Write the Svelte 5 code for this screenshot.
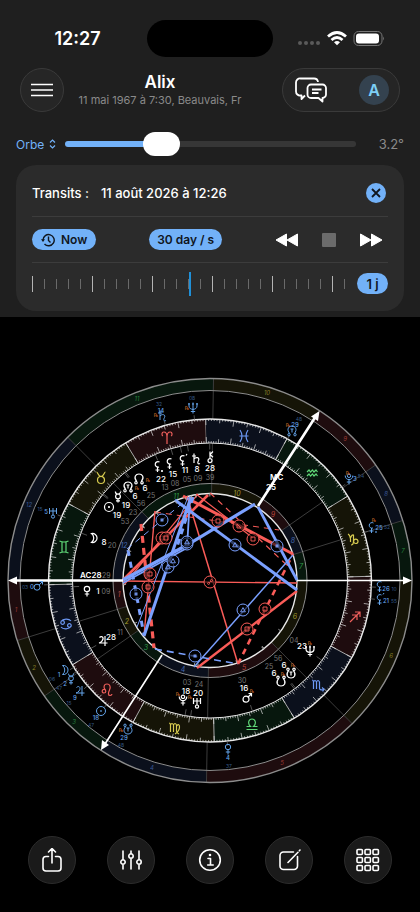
<script>
	let orb = $state(3.2);
	let orbMax = 10.4;
	let fill = $derived((orb / orbMax) * 100);

	// chart geometry
	const CX = 210;
	const CY = 580.5;
	const ASC = 91.5;
	const R_OUT = 202;
	const R_HOUSE = 190;
	const R_ZOD = 161.5;
	const R_ZOD_IN = 137.5;
	const R_RING = 97;
	const R_CORE = 87;

	const elements = ['red', 'yellow', 'green', 'blue'];
	const cusps = [180, 197.3, 214.9, 237.2, 269, 314.8, 360, 377.3, 394.9, 417.2, 449, 494.8, 540];

	function pt(angle, r) {
		const a = (angle * Math.PI) / 180;
		return [(CX + r * Math.cos(a)).toFixed(2), (CY - r * Math.sin(a)).toFixed(2)];
	}

	function ray(angle, r1, r2) {
		return 'M' + pt(angle, r1) + 'L' + pt(angle, r2);
	}

	function sector(a1, a2, r1, r2) {
		return `M${pt(a1, r1)}A${r1} ${r1} 0 0 0 ${pt(a2, r1)}L${pt(a2, r2)}A${r2} ${r2} 0 0 1 ${pt(a1, r2)}Z`;
	}

	let degreeTicks = '';
	for (let i = 0; i < 360; i++) {
		const len = i % 10 == 0 ? 6 : i % 5 == 0 ? 4 : 2;
		degreeTicks += ray(i + ASC, R_ZOD, R_ZOD - len);
		degreeTicks += ray(i + ASC, R_ZOD_IN, R_ZOD_IN + len);
	}

	const ring = (x, y, r) => `M${x - r},${y}a${r},${r} 0 1 0 ${2 * r},0a${r},${r} 0 1 0 ${-2 * r},0`;
	const node = 'M-2.3,2.6C-6,-2 -3,-5 0,-5S6,-2 2.3,2.6' + ring(-3, 3.7, 1.2) + ring(3, 3.7, 1.2);
	const nodeSouth = 'M-2.3,-2.6C-6,2 -3,5 0,5S6,2 2.3,-2.6' + ring(-3, -3.7, 1.2) + ring(3, -3.7, 1.2);
	const lilith = 'M2.5,-5A2.8 2.8 0 1 0 2,0M.5,0V5M-1.5,3H2.5';

	const glyphs = {
		sun: ring(0, 0, 4.5) + ring(0, 0, 0.5),
		moon: 'M-2.5,-4.5A4.6 4.6 0 1 1 -2.5,4.5A5.6 5.6 0 0 0 -2.5,-4.5Z',
		mercury: ring(0, -0.6, 2.4) + 'M-2.6,-5.4A2.6 2.6 0 0 0 2.6,-5.4M0,1.8V5.6M-2,3.8H2',
		venus: ring(0, -2, 2.7) + 'M0,.7V5.5M-2.2,3H2.2',
		mars: ring(-1, 1.2, 3) + 'M1.2,-1L4.5,-4.5M1.5,-4.5H4.5V-1.5',
		jupiter: 'M-3.5,-3.5C-1,-6 1.5,-3 -1,0Q-2,1.5 -4,2H4.5M2,-5V5',
		saturn: 'M-4,-3H0M-2,-5.5V4M-2,0C0,-2.5 4,-1.5 2.5,1.5C1,4 2,5.5 4,4.5',
		uranus: 'M-3.5,-5V1M3.5,-5V1M-3.5,-2H3.5M0,-5V2' + ring(0, 3.6, 1.6),
		neptune: 'M-4,-5V-2C-4,2.5 4,2.5 4,-2V-5M0,-5.5V5.5M-2.2,3.5H2.2M-5,-4H-3M3,-4H5M-1,-4H1',
		pluto: ring(0, -3.2, 1.7) + 'M-3.8,-3.5C-3.8,2 3.8,2 3.8,-3.5M0,.7V5.5M-2.2,3H2.2',
		chiron: ring(0, 3.6, 2) + 'M0,1.6V-5.5M3,-5.5L0,-2.5L3,.3',
		node,
		nodeTrue: node + 'M-1.5,-2H1.5M0,-2V1.5',
		nodeSouth,
		nodeSouthTrue: nodeSouth + 'M-1.5,-1H1.5M0,-1V2.5',
		lilith,
		lilithTrue: lilith + 'M4,-5.5L5,-7',
		lilithDot: lilith + ring(5, 4, 0.5)
	};

	const signs = [
		{ x: 167, y: 438, d: 'M0,6V-1C0,-4 -1.5,-6 -3.2,-6C-5.5,-6 -5.5,-2.5 -4,-2M0,-1C0,-4 1.5,-6 3.2,-6C5.5,-6 5.5,-2.5 4,-2' },
		{ x: 101, y: 478, d: ring(0, 2, 3.5) + 'M-4.5,-6C-3,-6 -3,-1.5 0,-1.5S3,-6 4.5,-6' },
		{ x: 64, y: 547, d: 'M-4.5,-6Q0,-4 4.5,-6M-4.5,6Q0,4 4.5,6M-2,-5V5M2,-5V5' },
		{ x: 66, y: 624, d: ring(-3.4, -1.5, 1.8) + 'M-5,-2.5C-3,-5.5 3,-5.5 5,-3' + ring(3.4, 1.5, 1.8) + 'M5,2.5C3,5.5 -3,5.5 -5,3' },
		{ x: 107, y: 690, d: ring(-3, 1.2, 1.8) + 'M-1.8,-.2C-4,-3 -3,-6 0,-6S4,-3 2.5,0S1,5.5 3,5.5S4.8,4 4.8,4' },
		{ x: 175, y: 728, d: 'M-6,-5Q-4.5,-5 -4.5,-3V4M-4.5,-3Q-3,-6 -1.5,-3V4M-1.5,-3Q0,-6 1.5,-3V3Q1.5,5 4,6M1.5,-2Q4.5,-5 4.5,-1Q4.5,3 0,6' },
		{ x: 252, y: 724, d: 'M-5.5,5.5H5.5M-5.5,2.5H-1.5C-5,-1 -3,-5 0,-5S5,-1 1.5,2.5H5.5' },
		{ x: 318, y: 685, d: 'M-6,-5Q-4.5,-5 -4.5,-3V4M-4.5,-3Q-3,-6 -1.5,-3V4M-1.5,-3Q0,-6 1.5,-3V3Q1.5,5.5 5.5,4.5M4,2.5L6,4.3L4.5,6.3' },
		{ x: 355, y: 617, d: 'M-5,5L5,-5M0,-5H5V0M-3,-2H2V3' },
		{ x: 353, y: 539, d: 'M-5,-5Q-3,-4 -2.5,0V3M-2.5,-1Q-1,-5 .5,-4V2Q.5,6 -2,6' + ring(2.8, 2.3, 2.2) },
		{ x: 313, y: 473, d: 'M-6,-1l2,-2l1.5,2l2,-2l1.5,2l2,-2l1.5,2M-6,3l2,-2l1.5,2l2,-2l1.5,2l2,-2l1.5,2' },
		{ x: 244, y: 436, d: 'M-4,-6Q0,0 -4,6M4,-6Q0,0 4,6M-4.5,0H4.5' }
	];

	// glyph, [x, y], degree, [x, y], minute, [x, y], longitude, retrograde [x, y]
	const natal = [
		['lilithDot', [157, 467], '22', [161, 479], '13', [165, 487], 22],
		['lilith', [169, 464], '15', [173, 474], '08', [175, 483], 15],
		['lilithTrue', [182, 461], '11', [185, 470], '05', [187, 479], 11],
		['saturn', [196, 459], '8', [197, 469], '09', [198, 478], 8],
		['chiron', [210, 457], '28', [210, 468], '39', [210, 477], 358.6],
		['node', [139, 479], '6', [145, 488], '25', [151, 495], 36.4, [148, 480]],
		['nodeTrue', [128, 487], '6', [135, 496], '56', [141, 503], 37, [137, 488]],
		['mercury', [118, 497], '19', [126, 505], '23', [133, 512], 49.4],
		['sun', [109, 507], '19', [117, 515], '53', [125, 521], 49.9],
		['moon', [94, 538], '8', [104, 542], '20', [112, 545], 68.3],
		['venus', [87, 591], '1', [98, 591], '09', [106, 591], 91.1],
		['jupiter', [103, 641], '28', [111, 637], '11', [120, 632], 118.2],
		['pluto', [183, 700], '18', [186, 691], '03', [187, 682], 168, [178, 694]],
		['uranus', [197, 703], '20', [198, 693], '24', [199, 684], 170.4, [190, 697]],
		['mars', [247, 698], '16', [244, 688], '30', [242, 680], 196.5, [252, 691]],
		['nodeSouth', [281, 681], '6', [274, 673], '25', [269, 666], 216.4, [283, 674]],
		['nodeSouthTrue', [291, 673], '6', [284, 665], '56', [278, 658], 217, [293, 665]],
		['neptune', [310, 651], '23', [302, 646], '04', [294, 640], 233, [310, 643]]
	];

	const transits = [
		['saturn', [162, 416], '14', [161, 410], '32', [159, 403], 14.5, [156, 415]],
		['neptune', [193, 408], '', [193, 400], '08', [192, 397], 4, [187, 408]],
		['uranus', [53, 513], '5', [46, 511], '15', [40, 508], 65.2],
		['mars', [38, 586], '0', [32, 586], '03', [25, 586], 90],
		['moon', [65, 670], '1', [59, 674], '06', [52, 678], 121],
		['mercury', [71, 679], '2', [65, 683], '47', [59, 687], 122.8],
		['jupiter', [80, 691], '9', [75, 697], '15', [69, 702], 129.2],
		['sun', [101, 711], '18', [96, 717], '47', [91, 724], 138.7],
		['nodeSouthTrue', [128, 729], '29', [124, 737], '48', [121, 744], 149.8, [121, 730]],
		['venus', [228, 749], '4', [228, 757], '37', [229, 765], 184.6],
		['lilithTrue', [379, 600], '21', [386, 600], '55', [394, 600], 262],
		['lilith', [379, 587], '26', [386, 588], '10', [394, 588], 266.2],
		['lilithDot', [371, 528], '25', [379, 527], '52', [387, 526], 285.8, [374, 520]],
		['pluto', [349, 479], '3', [355, 478], '54', [361, 475], 303.9, [348, 473]],
		['nodeTrue', [292, 431], '29', [295, 424], '48', [299, 418], 329.8, [288, 425]]
	];

	const innerHouses = [[119, 594], [127, 621], [146, 647], [183, 669], [244, 667], [295, 616], [301, 566], [293, 540], [273, 514], [237, 493], [176, 496], [124, 545]];
	const outerHouses = [[16, 610], [34, 668], [74, 722], [152, 768], [282, 763], [391, 656], [403, 551], [386, 494], [345, 439], [267, 393], [137, 399], [29, 505]];

	// colour, width, dash, path
	const lines = [
		['red', 1.3, '', 'M123,581L297,583'],
		['red', 1.5, '', 'M187,496L238,664'],
		['red', 2.4, '', 'M197,668L297,591'],
		['red', 2.6, '6 5', 'M238,664L293,554'],
		['red', 3, '', 'M183,496L293,554'],
		['red', 1.2, '', 'M196,494L253,538'],
		['red', 1.2, '6 5', 'M210,493L291,569'],
		['red', 1, '6 5', 'M155,512L279,530'],
		['red', 2.6, '', 'M123,580L208,495'],
		['red', 1.2, '', 'M124,585L198,494'],
		['red', 1.4, '', 'M155,511L144,636'],
		['red', 3.2, '7 5', 'M141,524L154,648'],
		['blue', 3.2, '', 'M123,580L187,545L255,504'],
		['blue', 1.8, '', 'M123,583L187,548L190,497'],
		['blue', 3, '', 'M175,500L297,590'],
		['blue', 2.8, '', 'M258,507L297,580'],
		['blue', 1, '6 5', 'M127,549L190,497'],
		['blue', 3, '6 6', 'M128,550L144,635'],
		['blue', 3, '6 5', 'M193,497L176,550'],
		['blue', 3, '', 'M191,497L144,636'],
		['blue', 1, '', 'M137,627L188,497'],
		['blue', 1.4, '', 'M194,667L293,555'],
		['blue', 1.6, '7 5', 'M155,649L238,664']
	];

	const marks = {
		square: 'M-2,-2H2V2H-2Z',
		trine: 'M0,-2.4L2.4,1.8H-2.4Z',
		sextile: 'M-2,0H2M-1,-1.8L1,1.8M1,-1.8L-1,1.8',
		quincunx: 'M-2,2V-2L2,2H-2',
		opposition: ring(-1.4, 1.4, 1) + ring(1.4, -1.4, 1) + 'M-.7,.7L.7,-.7'
	};

	const aspects = [
		['red', 'opposition', 210, 582],
		['red', 'square', 247, 629],
		['red', 'square', 265, 609],
		['red', 'square', 218, 521],
		['red', 'quincunx', 239, 526],
		['red', 'square', 253, 539],
		['red', 'square', 162, 538],
		['red', 'square', 166, 538],
		['red', 'square', 150, 574],
		['red', 'square', 148, 587],
		['blue', 'trine', 187, 544],
		['blue', 'trine', 187, 542],
		['blue', 'trine', 168, 567],
		['blue', 'trine', 173, 561],
		['blue', 'trine', 235, 545],
		['blue', 'trine', 243, 610],
		['blue', 'sextile', 277, 546],
		['blue', 'sextile', 162, 520],
		['blue', 'sextile', 136, 594],
		['blue', 'sextile', 195, 656]
	];

	const tools = [
		{ name: 'Partager', d: 'M8.5,8.5H6A3,3 0 0 0 3,11.5V20A3,3 0 0 0 6,23H18A3,3 0 0 0 21,20V11.5A3,3 0 0 0 18,8.5H15.5M12,15V.8M8.5,4L12,.5L15.5,4' },
		{ name: 'Réglages', d: 'M4,3V11.5M4,16.5V21M12,3V5.5M12,10.5V21M20,3V11.5M20,16.5V21' + ring(4, 14, 2.2) + ring(12, 8, 2.2) + ring(20, 14, 2.2) },
		{ name: 'Infos', d: ring(12, 12, 10.3) + 'M10,10.5H12.5V16.8M9.7,17H15.2' + ring(12, 7, 0.5) },
		{ name: 'Modifier', d: 'M16.5,4H6.5A3.5,3.5 0 0 0 3,7.5V18A3.5,3.5 0 0 0 6.5,21.5H17A3.5,3.5 0 0 0 20.5,18V8.5M11,14.5L21,4.3M22.4,2.6L23,2' },
		{ name: 'Grille', d: [2, 10, 18].map((y) => [2, 10, 18].map((x) => `M${x},${y - 0.5}h3.4a1,1 0 0 1 1,1v3a1,1 0 0 1 -1,1h-3.4a1,1 0 0 1 -1,-1v-3a1,1 0 0 1 1,-1z`).join('')).join('') }
	];
</script>

{#snippet body(p, kind)}
	<g class={kind}>
		<path class="leader" d={kind == 'natal' ? ray(p[6] + ASC, R_ZOD_IN, 131) : ray(p[6] + ASC, R_ZOD, 166)} />
		<path class="glyph" d={glyphs[p[0]]} transform="translate({p[1]})" />
		{#if p[2]}
			<text class="deg" x={p[3][0]} y={p[3][1] + 3}>{p[2]}</text>
		{/if}
		<text class="min" x={p[5][0]} y={p[5][1] + 3}>{p[4]}</text>
		{#if p[7]}
			<text class="retro" x={p[7][0]} y={p[7][1] + 2}>℞</text>
		{/if}
	</g>
{/snippet}

<div class="app">
	<header>
		<div class="status">
			<time>12:27</time>
			<div class="island"></div>
			<svg class="signal" width="86" height="18" viewBox="0 0 86 18">
				<g fill="#5a5a5a">
					<circle cx="2" cy="13" r="2" /><circle cx="8" cy="13" r="2" />
					<circle cx="14" cy="13" r="2" /><circle cx="20" cy="13" r="2" />
				</g>
				<g fill="none" stroke="#fff" stroke-width="2.8">
					<path d="M30,6.5Q39,-1.5 48,6.5" />
					<path d="M33.5,10Q39,5 44.5,10" />
				</g>
				<path d="M36,12.2Q39,9.8 42,12.2L39,15.2Z" fill="#fff" />
				<rect x="56" y="1.5" width="28" height="14" rx="4.5" fill="none" stroke="#777" />
				<rect x="58" y="3.5" width="23" height="10" rx="3" fill="#fff" />
				<path d="M85,6.5q1.5,2 0,4z" fill="#777" />
			</svg>
		</div>

		<nav>
			<button class="round menu" aria-label="Menu">
				<svg width="22" height="14" viewBox="0 0 22 14" stroke="#fff" stroke-width="1.6">
					<path d="M0,1.5H22M0,7H22M0,12.5H22" />
				</svg>
			</button>
			<div class="title">
				<h1>Alix</h1>
				<p>11 mai 1967 à 7:30, Beauvais, Fr</p>
			</div>
			<div class="account">
				<button aria-label="Messages">
					<svg width="32" height="26" viewBox="0 0 32 26" fill="none" stroke="#fff" stroke-width="1.8" stroke-linejoin="round">
						<path d="M10,18.5L6.5,22V18.5H5.5A4,4 0 0 1 1,14.5V5.5A4,4 0 0 1 5.5,1.5H19A4,4 0 0 1 23,5" />
						<path d="M16,7.5H27.5A3.5,3.5 0 0 1 31,11V17.5A3.5,3.5 0 0 1 27.5,21V24.5L23.5,21H16A3.5,3.5 0 0 1 12.5,17.5V11A3.5,3.5 0 0 1 16,7.5Z" />
						<path d="M17,12.5H26.5M17,16H23.5" />
					</svg>
				</button>
				<button class="avatar">A</button>
			</div>
		</nav>

		<div class="orb">
			<label class="picker">
				<select aria-label="Réglage">
					<option>Orbe</option>
				</select>
				<svg width="7" height="10" viewBox="0 0 7 10" fill="none" stroke="#72b1f8" stroke-width="1.2">
					<path d="M1,3.5L3.5,1L6,3.5M1,6.5L3.5,9L6,6.5" />
				</svg>
			</label>
			<input type="range" min="0" max={orbMax} step="0.1" bind:value={orb} style="--fill: {fill}%" aria-label="Orbe" />
			<output>{orb.toFixed(1)}°</output>
		</div>

		<section class="card">
			<div class="row">
				<span>Transits :</span>
				<span class="date">11 août 2026 à 12:26</span>
				<button class="close" aria-label="Fermer">
					<svg width="10" height="10" viewBox="0 0 10 10" stroke="#10161e" stroke-width="1.8"><path d="M1,1L9,9M9,1L1,9" /></svg>
				</button>
			</div>
			<div class="row controls">
				<button class="pill now">
					<svg width="14" height="14" viewBox="0 0 14 14" fill="none" stroke="#10161e" stroke-width="1.4">
						<path d="M2,7A5.6,5.6 0 1 1 3.5,11M7.5,3.5V7.5L9.5,9.5" />
						<path d="M0,6.2H4L2,9Z" fill="#10161e" stroke="none" />
					</svg>
					Now
				</button>
				<button class="pill">30 day / s</button>
				<div class="player">
					<button aria-label="Reculer">
						<svg width="24" height="14" viewBox="0 0 24 14" fill="#fff" stroke="#fff" stroke-linejoin="round"><path d="M11.5,1V13L1,7ZM22.5,1V13L12,7Z" /></svg>
					</button>
					<button aria-label="Stop"><svg width="14" height="14"><rect width="14" height="14" rx="1" fill="#6b6b6b" /></svg></button>
					<button aria-label="Avancer">
						<svg width="24" height="14" viewBox="0 0 24 14" fill="#fff" stroke="#fff" stroke-linejoin="round"><path d="M1.5,1V13L12,7ZM12.5,1V13L23,7Z" /></svg>
					</button>
				</div>
			</div>
			<div class="row">
				<svg class="ruler" height="24" viewBox="0 0 314 24" preserveAspectRatio="xMinYMid">
					{#each { length: 27 } as _, i}
						<rect class:major={i % 5 == 0} x={i * 12} y={i % 5 == 0 ? 4 : 7} width="1" height={i % 5 == 0 ? 16 : 10} />
					{/each}
					<rect class="cursor" x="157" y="0" width="2" height="24" />
				</svg>
				<button class="pill step">1 j</button>
			</div>
		</section>
	</header>

	<main>
		<svg class="chart" viewBox="0 370 420 421">
			<!-- houses and signs -->
			{#each cusps.slice(0, 12) as cusp, i}
				<path class="zone {elements[i % 4]}" d={sector(cusp, cusps[i + 1], R_OUT, R_HOUSE)} />
				<path class="zone {elements[i % 4]}" d={sector(cusp, cusps[i + 1], R_RING, R_CORE)} />
				<path class="cusp" d={ray(cusp, R_CORE, R_ZOD_IN) + ray(cusp, R_ZOD, R_OUT)} />
			{/each}
			{#each signs as sign, i}
				<path class="zone {elements[i % 4]}" d={sector(i * 30 + ASC, i * 30 + 30 + ASC, R_ZOD, R_ZOD_IN)} />
				<path class="edge" d={ray(i * 30 + ASC, R_ZOD_IN, R_ZOD)} />
			{/each}
			<path class="ticks" d={degreeTicks} />
			<circle class="circle dim" cx={CX} cy={CY} r={R_OUT} stroke-width="1.4" />
			<circle class="circle dim" cx={CX} cy={CY} r={R_HOUSE} />
			<circle class="circle" cx={CX} cy={CY} r={R_ZOD} stroke-width="1.4" />
			<circle class="circle" cx={CX} cy={CY} r={R_ZOD_IN} />
			<circle class="circle dim" cx={CX} cy={CY} r={R_RING} />
			<circle class="circle" cx={CX} cy={CY} r={R_CORE} stroke-width="1.4" />

			{#each signs as sign, i}
				<path class="sign {elements[i % 4]}" d={sign.d} transform="translate({sign.x} {sign.y})" />
			{/each}
			{#each innerHouses as [x, y], i}
				<text class="house {elements[i % 4]}" {x} y={y + 3}>{i + 1}</text>
			{/each}
			{#each outerHouses as [x, y], i}
				<text class="house outer {elements[i % 4]}" {x} y={y + 2}>{i + 1}</text>
			{/each}

			<!-- aspects -->
			{#each lines as [color, width, dash, d]}
				<path class="line {color}" {d} stroke-width={width} stroke-dasharray={dash || null} />
			{/each}
			{#each aspects as [color, kind, x, y]}
				<g class="aspect {color}" transform="translate({x} {y})">
					<circle r="6" />
					<path d={marks[kind]} />
				</g>
			{/each}
			{#each natal as p}
				<path class="edge" d={ray(p[6] + ASC, R_CORE, R_CORE - 3)} />
			{/each}

			<!-- angles -->
			<g class="angles">
				<path d="M123,580.5H15M258,506L316,416" stroke-width="2.6" />
				<path d="M297,580.5H405M162,655L105,744" stroke-width="1.6" />
				<path class="head" d="M8,580.5L17,576.5V584.5ZM412,580.5L403,576.5V584.5ZM319.5,411L311,416.5L318,421ZM101,750L102,740L109,745Z" />
			</g>
			<text class="angle" x="80" y="578">AC28</text>
			<text class="angle minute" x="102" y="578">29</text>
			<text class="angle" x="270" y="480">MC</text>
			<text class="angle" x="266" y="490">25</text>

			{#each natal as p}
				{@render body(p, 'natal')}
			{/each}
			{#each transits as p}
				{@render body(p, 'transit')}
			{/each}
		</svg>
	</main>

	<footer>
		{#each tools as tool}
			<button class="round tool" aria-label={tool.name}>
				<svg width="24" height="24" viewBox="0 0 24 24"><path d={tool.d} /></svg>
			</button>
		{/each}
	</footer>
</div>

<style>
	:global(body) {
		margin: 0;
		background: #000;
	}
	.app {
		min-height: 100vh;
		display: flex;
		flex-direction: column;
		color: #fff;
		font-family: Inter, 'Liberation Sans', sans-serif;
	}
	button {
		padding: 0;
		border: none;
		background: none;
		color: inherit;
		font-family: inherit;
		cursor: pointer;
	}
	svg {
		display: block;
	}
	header {
		background: #1f1f1f;
		padding-bottom: 6px;
	}
	.status {
		display: grid;
		grid-template-columns: 1fr 126px 1fr;
		align-items: center;
		padding-top: 20px;
	}
	.status time {
		font-size: 18px;
		font-weight: 600;
		justify-self: center;
		padding-left: 8px;
	}
	.island {
		height: 37px;
		border-radius: 19px;
		background: #000;
	}
	.signal {
		justify-self: center;
		padding-left: 4px;
		padding-right: 16px;
	}
	nav {
		display: flex;
		align-items: center;
		padding: 11px 20px 0;
		gap: 12px;
	}
	.round {
		display: flex;
		align-items: center;
		justify-content: center;
		border-radius: 50%;
		border: 1px solid #3a3a3a;
		background: #262626;
		box-sizing: border-box;
	}
	.menu {
		width: 44px;
		height: 44px;
	}
	.title {
		min-width: 168px;
		text-align: center;
	}
	h1 {
		margin: 0;
		font-size: 17px;
		font-weight: 600;
		line-height: 20px;
	}
	.title p {
		margin: 0;
		font-size: 11px;
		line-height: 16px;
		color: #8a8a8a;
	}
	.account {
		margin-left: auto;
		width: 118px;
		height: 44px;
		box-sizing: border-box;
		padding: 0 10px 0 12px;
		display: flex;
		align-items: center;
		justify-content: space-between;
		border: 1px solid #3a3a3a;
		border-radius: 22px;
		background: #252525;
	}
	.avatar {
		width: 30px;
		height: 30px;
		border-radius: 50%;
		background: #34424f;
		color: #7dd0f7;
		font-size: 16px;
		font-weight: 600;
	}
	.orb {
		display: flex;
		align-items: center;
		height: 24px;
		padding: 20px 16px 9px;
	}
	.picker {
		display: flex;
		align-items: center;
		gap: 4px;
		width: 49px;
	}
	select {
		appearance: none;
		border: none;
		padding: 0;
		background: none;
		color: #72b1f8;
		font-family: inherit;
		font-size: 12px;
	}
	input {
		appearance: none;
		flex: 1;
		min-width: 0;
		height: 24px;
		margin: 0;
		background: none;
	}
	input::-webkit-slider-runnable-track {
		height: 6px;
		border-radius: 3px;
		background: linear-gradient(to right, #72b1f8 var(--fill), #363636 var(--fill));
	}
	input::-webkit-slider-thumb {
		appearance: none;
		width: 37px;
		height: 24px;
		margin-top: -9px;
		border-radius: 12px;
		background: #fff;
	}
	output {
		width: 48px;
		text-align: right;
		font-size: 13px;
		color: #8a8a8a;
	}
	.card {
		margin: 0 16px;
		padding: 3px 16px 7px;
		border-radius: 20px;
		background: #2b2b2b;
	}
	.row {
		display: flex;
		align-items: center;
		justify-content: space-between;
		height: 45px;
		font-size: 13px;
		font-weight: 500;
	}
	.row + .row {
		border-top: 1px solid #3c3c3c;
	}
	.row:first-child {
		height: 47px;
		padding-top: 1px;
	}
	.row:last-child {
		height: 41px;
	}
	.date {
		margin-left: 12px;
		margin-right: auto;
	}
	.close {
		display: flex;
		align-items: center;
		justify-content: center;
		width: 20px;
		height: 20px;
		margin-right: 2px;
		border-radius: 50%;
		background: #72b1f8;
	}
	.pill {
		display: flex;
		align-items: center;
		justify-content: center;
		height: 21px;
		padding: 0 8px;
		border-radius: 11px;
		background: #72b1f8;
		color: #10161e;
		font-size: 13px;
		font-weight: 600;
		white-space: nowrap;
	}
	.pill.now {
		gap: 6px;
		padding: 0 9px;
	}
	.pill.step {
		min-width: 31px;
	}
	.controls .pill {
		font-size: 12px;
	}
	.player {
		display: flex;
		align-items: center;
		gap: 23px;
		padding-right: 5px;
	}
	.ruler {
		flex: 1;
		min-width: 0;
		fill: #6a6a6a;
	}
	.major {
		fill: #b4b4b4;
	}
	.cursor {
		fill: #2090d8;
	}

	main {
		flex: 1;
		padding-top: 53px;
	}
	.chart {
		width: 100%;
	}
	.chart path,
	.circle {
		fill: none;
	}
	.chart .zone {
		stroke: none;
	}
	.chart .zone.red {
		fill: #1e0c0e;
	}
	.chart .zone.yellow {
		fill: #151407;
	}
	.chart .zone.green {
		fill: #07170d;
	}
	.chart .zone.blue {
		fill: #0b101c;
	}
	.cusp {
		stroke: #3c3c3c;
		stroke-width: 1;
	}
	.edge {
		stroke: #aaa;
		stroke-width: 1;
	}
	.ticks {
		stroke: #ddd;
		stroke-width: 0.7;
	}
	.circle {
		stroke: #e8e8e8;
	}
	.dim {
		stroke: #8c8c8c;
	}
	.sign {
		stroke-width: 1.2;
	}
	.sign.red {
		stroke: #f0605c;
	}
	.sign.yellow {
		stroke: #d8cc50;
	}
	.sign.green {
		stroke: #60d878;
	}
	.sign.blue {
		stroke: #6c98f4;
	}
	text {
		text-anchor: middle;
	}
	.house {
		font-size: 7px;
		font-style: italic;
	}
	.house.outer {
		font-size: 6px;
		opacity: 0.8;
	}
	.house.red {
		fill: #b8443e;
	}
	.house.yellow {
		fill: #a09a30;
	}
	.house.green {
		fill: #2f9a48;
	}
	.house.blue {
		fill: #4468b0;
	}
	.line.red,
	.aspect.red {
		stroke: #fa5c58;
	}
	.line.blue,
	.aspect.blue {
		stroke: #7aa0ff;
	}
	.aspect circle {
		fill: #000;
		fill-opacity: 0.6;
		stroke-width: 1;
	}
	.aspect path {
		stroke-width: 0.9;
	}
	.angles {
		stroke: #fff;
	}
	.chart .head {
		fill: #fff;
		stroke: none;
	}
	.angle {
		fill: #fff;
		font-size: 8px;
		font-weight: 600;
		text-anchor: start;
	}
	.minute {
		fill: #777;
		font-size: 7px;
		font-weight: 400;
	}
	.leader {
		stroke: #666;
		stroke-width: 0.8;
	}
	.glyph {
		stroke: #fff;
		stroke-width: 1.2;
	}
	.deg {
		fill: #fff;
		font-size: 8px;
		font-weight: 500;
	}
	.min {
		fill: #747474;
		font-size: 7px;
	}
	.retro {
		fill: #d8702c;
		font-family: 'DejaVu Sans', sans-serif;
		font-size: 5px;
	}
	.transit .glyph {
		stroke: #64a4ea;
		stroke-width: 1;
	}
	.transit .deg {
		fill: #64a4ea;
		font-size: 6px;
	}
	.transit .min {
		fill: #345884;
		font-size: 5px;
	}

	footer {
		display: flex;
		justify-content: space-between;
		padding: 0 28px 28px;
	}
	.tool {
		width: 48px;
		height: 48px;
		border-color: #2c2c2c;
		background: #1a1a1a;
	}
	.tool path {
		fill: none;
		stroke: #fff;
		stroke-width: 1.6;
		stroke-linecap: round;
		stroke-linejoin: round;
	}
</style>
